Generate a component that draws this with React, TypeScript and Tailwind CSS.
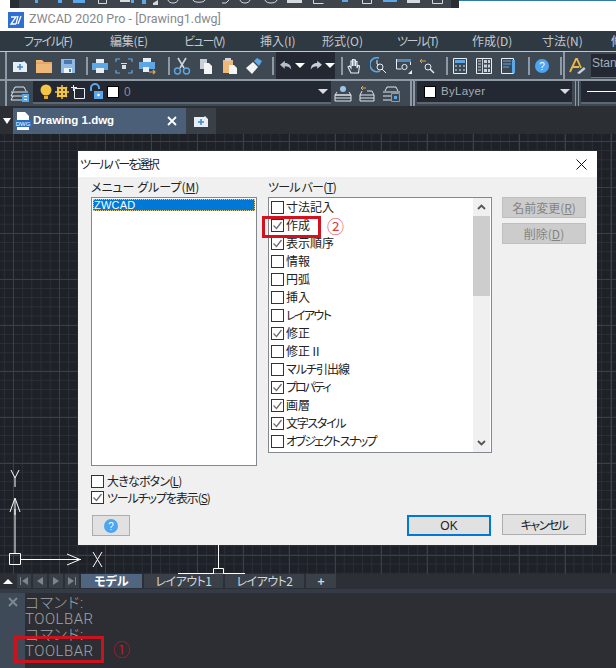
import React from "react";

const font = "font-['Noto_Sans_CJK_JP','Noto_Sans',sans-serif] [font-feature-settings:'palt']";

function Svg({ children, w = 18, h = 18 }: { children: React.ReactNode; w?: number; h?: number }) {
  return (
    <svg width={w} height={h} viewBox={`0 0 ${w} ${h}`} fill="none">
      {children}
    </svg>
  );
}

const icons: Record<string, React.ReactNode> = {
  newfile: (
    <Svg>
      <path d="M2 5h10l1-1 3 3v8H2z" fill="#e8eef4" />
      <path d="M9 7v6M6 10h6" stroke="#3b87d4" strokeWidth="1.5" />
    </Svg>
  ),
  folder: (
    <Svg>
      <path d="M1 3h6l2 2h8v11H1z" fill="#f0b878" />
      <path d="M1 6h16" stroke="#d89a58" />
    </Svg>
  ),
  save: (
    <Svg>
      <path d="M2 2h14v14H2z" fill="#8fb8e4" />
      <path d="M5 3h8v4H5z" fill="#4a78b0" />
      <path d="M5 11h8v5H5z" fill="#eef3f8" />
      <path d="M10 12h2v3h-2z" fill="#4a78b0" />
    </Svg>
  ),
  print: (
    <Svg>
      <path d="M5 2h8v4H5z" fill="#e8eef4" />
      <path d="M1 6h16v7H1z" fill="#5ea7e6" />
      <path d="M5 11h8v5H5z" fill="#e8eef4" />
    </Svg>
  ),
  scan: (
    <Svg>
      <path d="M1 5V2h4M13 2h4v3M1 13v3h4M13 16h4v-3" stroke="#5ea7e6" strokeWidth="1.2" />
      <path d="M6 6h6v1H6zM7 8h4v4H7z" fill="#d8dde2" />
    </Svg>
  ),
  preview: (
    <Svg>
      <path d="M4 1h8v4H4z" fill="#e8eef4" />
      <path d="M0 5h16v7H0z" fill="#5ea7e6" />
      <path d="M4 10h6v5H4z" fill="#e8eef4" />
      <path d="M10 15h6m-2-2 2 2-2 2" stroke="#e0a850" strokeWidth="1.2" />
    </Svg>
  ),
  cut: (
    <Svg>
      <path d="M5 1l6 10M13 1L7 11" stroke="#d0d5da" strokeWidth="1.6" />
      <circle cx="4.5" cy="14" r="3" stroke="#5ea7e6" strokeWidth="1.4" />
      <circle cx="13.5" cy="14" r="3" stroke="#5ea7e6" strokeWidth="1.4" />
    </Svg>
  ),
  copy: (
    <Svg>
      <path d="M3 2h7v10H3z" fill="#c8ced4" />
      <path d="M7 6h5l3 3v8H7z" fill="#f2f4f6" />
    </Svg>
  ),
  paste: (
    <Svg>
      <path d="M2 3h10v13H2z" fill="#f0b878" />
      <path d="M4 1h6v3H4z" fill="#d0d5da" />
      <path d="M8 8h5l3 3v6H8z" fill="#f2f4f6" />
    </Svg>
  ),
  brush: (
    <Svg>
      <path d="M1 11l7-6 5 5-6 7z" fill="#f2f4f6" />
      <path d="M9 4l3-3 5 3-3 5z" fill="#5ea7e6" />
    </Svg>
  ),
  hand: (
    <Svg>
      <path
        d="M5 16l-3-6 1.5-1L5 11V4h1.500v5V2.500H8V9V3h1.500v6V4.500H11V11l1-2.500 1.500.5-1 7z"
        stroke="#e8eef4"
        strokeWidth="1.1"
      />
    </Svg>
  ),
  zoomr: (
    <Svg>
      <path d="M9 1a7 7 0 1 0 1 13" stroke="#5ea7e6" strokeWidth="1.6" />
      <circle cx="10" cy="10" r="3" stroke="#e8eef4" />
      <path d="M12 12l4 4M7 3v4l2 1" stroke="#e8eef4" />
    </Svg>
  ),
  zoomw: (
    <Svg>
      <path d="M1 2h15v3H1z" fill="#5ea7e6" opacity=".7" />
      <path d="M15.500 5v3M1.500 2v10h5" stroke="#e8eef4" />
      <circle cx="9.500" cy="10" r="2.600" stroke="#e8eef4" />
      <path d="M13 17l4-4v4z" fill="#e8eef4" />
    </Svg>
  ),
  zoomp: (
    <Svg>
      <path d="M1 4h6M3 2L1 4l2 2" stroke="#e0a850" />
      <circle cx="9" cy="10" r="3" stroke="#e8eef4" />
      <path d="M11 12l4 4" stroke="#e8eef4" strokeWidth="1.400" />
    </Svg>
  ),
  calc: (
    <Svg>
      <path d="M2.500 1.500h13v15h-13z" stroke="#e8eef4" />
      <path d="M4 3h10v3H4z" fill="#5ea7e6" />
      <path d="M4 8h2v2H4zM8 8h2v2H8zM12 8h2v2h-2zM4 12h2v2H4zM8 12h2v2H8zM12 12h2v2h-2z" fill="#7f9ab4" />
    </Svg>
  ),
  table: (
    <Svg>
      <path d="M1.500 1.500h15v15h-15z" stroke="#e8eef4" />
      <path d="M7.500 2v14M3 4h3M3 7h3M3 10h3M3 13h3" stroke="#c8d0d8" />
      <path d="M9 3h3v3H9zM13 3h2v3h-2zM9 7.500h3v3H9zM13 7.500h2v3h-2zM9 12h3v3H9zM13 12h2v3h-2z" fill="#c8d0d8" />
    </Svg>
  ),
  sheet: (
    <Svg>
      <path d="M2.500 1.500h12v15h-12z" stroke="#e8eef4" />
      <path d="M4 4h8M4 7h8M4 10h6" stroke="#5ea7e6" />
      <path d="M13 3h3v13h-3z" fill="#5ea7e6" />
    </Svg>
  ),
  help: (
    <svg width="18" height="18" viewBox="0 0 18 18">
      <circle cx="9" cy="9" r="7" fill="#4ea5f2" />
      <text x="9" y="12.500" textAnchor="middle" fontSize="10" fill="#ffffff" fontFamily="Liberation Sans">?</text>
    </svg>
  ),
  textstyle: (
    <Svg>
      <path d="M2 15L8 2h1l4 9M5 10h6" stroke="#eab84a" strokeWidth="1.800" />
      <path d="M9 16l7-6 1.500 2-6 5z" fill="#c8d0d8" />
    </Svg>
  ),
  layers: (
    <Svg w={20} h={18}>
      <path d="M3 6l2-4h9l2 4M1 7h17M1 11h11M1 15h11M3 7l-2 4M3 11l-2 4" stroke="#dfe5ea" />
      <path d="M12 9h7v8h-7z" fill="#5ea7e6" />
      <path d="M14 11.500h3M14 14.500h3" stroke="#eaf2fa" />
    </Svg>
  ),
  layerA: (
    <Svg>
      <circle cx="9" cy="4" r="3" fill="#9fc4e8" />
      <path d="M3 7l-2 3h16l-2-3M1 10h16M1 13h16M1 16h16M1 10v6M17 10v6" stroke="#dfe5ea" />
    </Svg>
  ),
  layerB: (
    <Svg>
      <path d="M4 6l-2 4h14l-2-4H9M2 10v6h14v-6M2 13h14" stroke="#dfe5ea" />
      <path d="M8 3H3m2-2L3 3l2 2" stroke="#e0a850" />
    </Svg>
  ),
  layerC: (
    <Svg>
      <path d="M3 6l2-4h9l2 4M1 7h17M1 11h9M1 15h9" stroke="#dfe5ea" />
      <path d="M9.500 8.500h8v8h-8z" stroke="#5ea7e6" />
      <path d="M12 11h3v3h-3z" fill="#5ea7e6" />
    </Svg>
  ),
};

function Tool({ name }: { name: string }) {
  return <div className="w-6 h-full flex items-center justify-center shrink-0">{icons[name]}</div>;
}

function Sep({ className }: { className: string }) {
  return (
    <div className={`h-full flex items-center justify-end shrink-0 ${className}`}>
      <div className="w-0.5 h-[18px] bg-[#8e99a6]" />
    </div>
  );
}

function Grip() {
  return <div className="w-[2px] h-full bg-[#8f9aa8] ml-[5px] mr-px shrink-0" />;
}

function Caret({ className = "" }: { className?: string }) {
  return <div className={`w-0 h-0 border-x-[5px] border-x-transparent border-t-[5px] border-t-[#d8dde2] ${className}`} />;
}

function Arrow({ dir }: { dir: "l" | "r" }) {
  return (
    <svg width="12" height="11" viewBox="0 0 15 12">
      {dir === "l" ? (
        <path d="M0 5l6-5v3c5 0 8 3 8 8-2-3-4-4-8-4v3z" fill="#b8bec5" />
      ) : (
        <path d="M15 5L9 0v3C4 3 1 6 1 11c2-3 4-4 8-4v3z" fill="#c8ced4" />
      )}
    </svg>
  );
}

const checkRows: [string, boolean, string][] = [
  ["寸法記入", false, ""],
  ["作成", true, ""],
  ["表示順序", true, ""],
  ["情報", false, ""],
  ["円弧", false, ""],
  ["挿入", false, ""],
  ["レイアウト", false, "tracking-[-1.6px]"],
  ["修正", true, ""],
  ["修正Ⅱ", false, ""],
  ["マルチ引出線", false, "tracking-[-1px]"],
  ["プロパティ", true, "tracking-[-2px]"],
  ["画層", true, ""],
  ["文字スタイル", true, "tracking-[-1.3px]"],
  ["オブジェクト スナップ", false, "tracking-[-1.7px]"],
];

function Check({ on }: { on: boolean }) {
  return (
    <div className="w-[13px] h-[13px] border border-[#333333] bg-white shrink-0 flex items-center justify-center">
      {on && (
        <svg width="11" height="11" viewBox="0 0 11 11">
          <path d="M1.500 5.500l3 3 5-6.500" stroke="#6e6e6e" strokeWidth="1.300" fill="none" />
        </svg>
      )}
    </div>
  );
}

const menus: [string, string][] = [
  ["ファイル(F)", "w-[86px] tracking-[-1.200px]"],
  ["編集(E)", "w-[74px] tracking-[-0.300px]"],
  ["ビュー(V)", "w-[76px] tracking-[-1.300px]"],
  ["挿入(I)", "w-[62px]"],
  ["形式(O)", "w-[75px]"],
  ["ツール(T)", "w-[75px] tracking-[-1.500px]"],
  ["作成(D)", "w-[70px]"],
  ["寸法(N)", "w-[69px]"],
  ["修", "w-[20px]"],
];

function TabRowButton({ children }: { children: React.ReactNode }) {
  return <div className="w-[14px] h-[14px] flex items-center justify-center bg-[#3a4048] shrink-0">{children}</div>;
}

export default function App() {
  return (
    <div className={`w-[616px] h-[668px] flex flex-col overflow-hidden bg-[#2c2e33] ${font}`}>
      {/* window above */}
      <div className="h-2 flex shrink-0 bg-white">
        <svg className="shrink-0" width="459" height="8" viewBox="0 0 459 8">
          <path d="M19 0h440v8H19z" fill="#3d444c" />
          <path d="M10 0h9v8h-9zM451 0h8v8h-8z" fill="#2b2e35" />
          <g fill="#5ea7e6">
            <path d="M35 0h3v3h-3zM58 0h4v3h-4zM73 0h12v3H73zM131 0h3v3h-3zM142 0h4v4h-4zM342 0h6v2h-6zM383 0h14v2h-14z" />
          </g>
          <g fill="#d5dade">
            <path d="M120 0h10v2h-10zM407 0h13v3h-13zM153 3l5-3v5h-5zM287 0h15v3h-15z" />
          </g>
          <g stroke="#d5dade" fill="none">
            <path d="M98.500 0v3.500h8V0M168 0c1 4 9 4 10 0M193 0c1 3 11 3 12 0M222 3h4l3-3M240 0c1 4 9 4 10 0M265 0c1 4 11 4 12 0M313.500 0v3.500h10M362.500 0v3.500h9V0M432.500 0v3.500h10V0" />
          </g>
        </svg>
        <div className="flex-1 h-px bg-[#2d7da6]" />
      </div>

      {/* title bar */}
      <div className="h-[23px] shrink-0 bg-white flex items-center pl-2 gap-[5px]">
        <div className="w-4 h-4 bg-[#2f6fd0] flex items-center justify-center">
          <svg width="14" height="14" viewBox="0 0 14 14">
            <path d="M2 4h5L2 11h5M9 3l-2 8M12 3l-3 8" stroke="#ffffff" strokeWidth="1.300" fill="none" />
          </svg>
        </div>
        <span className="text-[12.500px] text-[#888888] font-['Roboto',sans-serif] whitespace-nowrap">
          ZWCAD 2020 Pro - [Drawing1.dwg]
        </span>
      </div>

      {/* menu */}
      <div className="h-5 shrink-0 bg-[#2f3941] flex items-center pl-6 text-[12px] text-[#c4c9ce] whitespace-nowrap">
        {menus.map(([t, w]) => (
          <div key={t} className={`${w} shrink-0`}>{t}</div>
        ))}
      </div>
      <div className="h-px shrink-0 bg-[#c3c8cc]" />

      {/* toolbar 1 */}
      <div className="h-[27px] shrink-0 bg-[#3e4853] flex items-center overflow-hidden">
        <Grip />
        <Tool name="newfile" />
        <Tool name="folder" />
        <Tool name="save" />
        <Sep className="w-2" />
        <Tool name="print" />
        <Tool name="scan" />
        <Tool name="preview" />
        <Sep className="w-[10px]" />
        <Tool name="cut" />
        <Tool name="copy" />
        <Tool name="paste" />
        <Tool name="brush" />
        <Sep className="w-2" />
        <div className="w-[59px] ml-0.5 h-full bg-[#232833] flex items-center pl-1 shrink-0">
          <Arrow dir="l" />
          <Caret className="ml-[3px] mr-[5px] border-t-white" />
          <Arrow dir="r" />
          <Caret className="ml-[3px] border-t-white" />
        </div>
        <Sep className="w-2" />
        <Tool name="hand" />
        <Tool name="zoomr" />
        <div className="w-px" />
        <Tool name="zoomw" />
        <Tool name="zoomp" />
        <Sep className="w-2" />
        <Tool name="calc" />
        <Tool name="table" />
        <Tool name="sheet" />
        <Sep className="w-2.5" />
        <Tool name="help" />
        <Sep className="w-2" />
        <div className="w-0.5 h-full bg-[#8e99a6] ml-px shrink-0" />
        <Tool name="textstyle" />
        <div className="flex-1 ml-0.5 h-[24px] bg-[#232833] border-b border-b-[#6b7480] text-[12px] text-[#a7adb4] pl-px font-['Liberation_Sans',sans-serif] overflow-hidden whitespace-nowrap">
          Stan
        </div>
      </div>
      <div className="h-0.5 shrink-0 bg-[#8f9aa4]" />

      {/* toolbar 2 */}
      <div className="h-[25px] shrink-0 bg-[#3e4853] flex items-start overflow-hidden">
        <Grip />
        <Tool name="layers" />
        <div className="w-[298px] ml-px h-[23px] bg-[#232833] border-b-2 border-b-[#5d6772] flex items-center pl-[6px] pr-[3px] gap-[2px] shrink-0">
          <svg width="14" height="16" viewBox="0 0 14 16">
            <circle cx="7" cy="6" r="5.500" fill="#f4c542" />
            <path d="M5 12h4v3H5z" fill="#e0a93a" />
          </svg>
          <svg width="14" height="14" viewBox="0 0 14 14">
            <path d="M2 2h10v10H2z" fill="#f4c542" />
            <path d="M7 0v14M0 7h14M2 2l10 10M12 2L2 12" stroke="#f4c542" strokeWidth="1.500" />
            <circle cx="5" cy="5" r="1" fill="#232833" />
            <circle cx="9" cy="5" r="1" fill="#232833" />
            <circle cx="5" cy="9" r="1" fill="#232833" />
            <circle cx="9" cy="9" r="1" fill="#232833" />
          </svg>
          <svg width="14" height="14" viewBox="0 0 14 14">
            <path d="M3.500 3.500h10v10h-10z" stroke="#e8eef4" fill="none" />
            <path d="M2.500 0v6M0 2.500h6" stroke="#e8eef4" />
          </svg>
          <svg className="ml-[2px]" width="15" height="17" viewBox="0 0 15 17">
            <path d="M2 8V5a4 4 0 0 1 8 0v1" stroke="#5ea7e6" strokeWidth="2" fill="none" />
            <path d="M5 8h9v8H5z" fill="#5ea7e6" />
            <circle cx="9.500" cy="12" r="1.300" fill="#ffffff" />
          </svg>
          <div className="w-3 h-3 bg-white border border-black ml-px" />
          <span className="text-[12px] text-[#8b9097] ml-[3px] font-['Liberation_Sans',sans-serif]">0</span>
          <Caret className="ml-auto" />
        </div>
        <Tool name="layerA" />
        <Tool name="layerB" />
        <Tool name="layerC" />
        <div className="h-full w-[5px] ml-[7px] border-x-2 border-x-[#8e99a6] shrink-0" />
        <div className="w-[155px] ml-[2px] h-[23px] bg-[#232833] border-b-2 border-b-[#5d6772] flex items-center pl-[7px] pr-[2px] shrink-0">
          <div className="w-3 h-3 bg-white border border-black" />
          <span className="text-[11.500px] tracking-[0.3px] text-[#a7adb4] ml-[5px] font-['Liberation_Sans',sans-serif]">ByLayer</span>
          <Caret className="ml-auto" />
        </div>
        <div className="w-1 h-full ml-[3px] border-x border-x-[#8e99a6] shrink-0" />
        <div className="flex-1 ml-[2px] h-[23px] bg-[#232833] border-b-2 border-b-[#5d6772] flex items-center pl-[6px]">
          <div className="flex-1 h-px bg-white" />
        </div>
      </div>

      {/* file tabs */}
      <div className="h-[28px] shrink-0 bg-[#2b2e33] flex items-end text-white">
        <div className="w-[13px] h-[26px] flex items-center justify-center shrink-0">
          <div className="w-0 h-0 border-x-[4px] border-x-transparent border-t-[6px] border-t-white" />
        </div>
        <div className="w-[173px] h-[26px] bg-[#4c5f78] flex items-center pl-[2px] pr-[9px] shrink-0">
          <svg width="16" height="18" viewBox="0 0 16 18">
            <path d="M2 0h8l4 4v14H2z" fill="#ffffff" />
            <path d="M0 8h16v7H0z" fill="#2e6cc4" />
            <text x="8" y="14" textAnchor="middle" fontSize="6" fontFamily="Liberation Sans" fill="#ffffff">DWG</text>
          </svg>
          <span className="ml-[2px] text-[11.500px] font-bold whitespace-nowrap font-['Liberation_Sans',sans-serif]">Drawing 1.dwg</span>
          <svg className="ml-auto" width="10" height="10" viewBox="0 0 10 10">
            <path d="M1 1l8 8M9 1l-8 8" stroke="#ffffff" strokeWidth="1.800" />
          </svg>
        </div>
        <div className="w-[30px] h-[26px] bg-[#3a4048] flex items-center justify-center shrink-0">{icons.newfile}</div>
      </div>

      {/* canvas */}
      <div className="h-[440px] shrink-0 relative bg-[#1e2128] bg-[linear-gradient(to_right,#3c4046_1px,transparent_1px),linear-gradient(to_bottom,#3c4046_1px,transparent_1px),linear-gradient(to_right,#2b2f36_1px,transparent_1px),linear-gradient(to_bottom,#2b2f36_1px,transparent_1px)] bg-[size:46px_46px,46px_46px,9.2px_9.2px,9.2px_9.2px] bg-[position:13px_7px,13px_7px,13px_7px,13px_7px]">
        <svg className="absolute left-0 top-[331px]" width="120" height="109" viewBox="0 0 120 109">
          <g stroke="#ffffff" fill="none" strokeWidth="1">
            <path d="M15 88V34M10 47l5-14 5 14M15 44v6" />
            <path d="M20.500 94.500H81M67 89l13 5.500-13 5.500" />
            <path d="M9.500 88.500h11v11h-11z" />
            <path d="M11 5l4 8 4-8M15 13v9" />
            <path d="M93 87l9 15M102 87l-9 15" />
          </g>
        </svg>
        <svg className="absolute left-[175px] top-[411px]" width="70" height="29" viewBox="0 0 70 29">
          <g stroke="#ffffff" fill="none">
            <path d="M43.500 0v23M3 28.500h36M49 28.500h21" />
            <path d="M38.500 23.500h10v5.500h-10z" />
          </g>
        </svg>

        {/* dialog */}
        <div className="absolute left-[78px] top-[17px] w-[519px] h-[394px] bg-[#f0f0f0] flex flex-col text-[12px] text-[#222222]">
          <div className="h-[26px] bg-white flex items-center justify-between pl-[2px] pr-[10px] shrink-0">
            <span className="tracking-[-1.800px]">ツールバーを選択</span>
            <svg width="11" height="11" viewBox="0 0 11 11">
              <path d="M.5.5l10 10M10.500.5l-10 10" stroke="#111111" />
            </svg>
          </div>
          <div className="flex-1 flex pl-[13px] relative">
            <div className="w-[166px] flex flex-col shrink-0">
              <div className="h-5 leading-5 whitespace-nowrap">メニュー グループ(<u>M</u>)</div>
              <div className="h-[269px] bg-white border border-[#828790] p-px">
                <div className="h-[12px] bg-[#0078d7] border border-dotted border-[#d8c890] text-white text-[11px] leading-[10px] font-['Liberation_Sans',sans-serif] tracking-[0.2px]">ZWCAD</div>
              </div>
              <div className="mt-[7px] flex items-center gap-[3px] h-4">
                <Check on={false} />
                <span className="whitespace-nowrap tracking-[-0.800px]">大きなボタン(<u>L</u>)</span>
              </div>
              <div className="mt-px flex items-center gap-[3px] h-[15px]">
                <Check on />
                <span className="whitespace-nowrap tracking-[-1.100px]">ツールチップを表示(<u>S</u>)</span>
              </div>
              <div className="mt-[10px] ml-px w-[38px] h-[21px] bg-[#e1e1e1] border border-[#adadad] flex items-center justify-center">
                {icons.help}
              </div>
            </div>
            <div className="w-[224px] ml-[11px] flex flex-col shrink-0">
              <div className="h-5 leading-5 whitespace-nowrap tracking-[-0.800px]">ツール バー(<u>T</u>)</div>
              <div className="h-[256px] bg-white border border-[#828790] flex overflow-hidden">
                <div className="flex-1 flex flex-col pl-[2px]">
                  {checkRows.map(([t, on, tr]) => (
                    <div key={t} className="h-[18px] shrink-0 flex items-center gap-[2px] whitespace-nowrap">
                      <Check on={on} />
                      <span className={tr}>{t}</span>
                    </div>
                  ))}
                </div>
                <div className="w-[17px] mr-[1px] bg-[#f0f0f0] flex flex-col items-center shrink-0">
                  <div className="h-[18px] flex items-center justify-center">
                    <svg width="9" height="6" viewBox="0 0 9 6">
                      <path d="M1 5l3.500-3.500L8 5" stroke="#555555" strokeWidth="1.800" fill="none" />
                    </svg>
                  </div>
                  <div className="w-full h-[80px] bg-[#cdcdcd]" />
                  <div className="mt-auto h-[18px] flex items-center justify-center">
                    <svg width="9" height="6" viewBox="0 0 9 6">
                      <path d="M1 1l3.500 3.500L8 1" stroke="#555555" strokeWidth="1.800" fill="none" />
                    </svg>
                  </div>
                </div>
              </div>
              <div className="mt-[62px] self-end w-[84px] mr-px h-[21px] bg-[#e1e1e1] border-2 border-[#0078d7] flex items-center justify-center font-['Liberation_Sans',sans-serif]">
                OK
              </div>
            </div>
            <div className="w-[84px] ml-[10px] flex flex-col shrink-0">
              <div className="h-[21px] mt-5 bg-[#cccccc] border border-[#bfbfbf] text-[#838383] flex items-center justify-center whitespace-nowrap">
                名前変更(<u>R</u>)
              </div>
              <div className="h-[21px] mt-[5px] bg-[#cccccc] border border-[#bfbfbf] text-[#838383] flex items-center justify-center whitespace-nowrap">
                削除(<u>D</u>)
              </div>
              <div className="mt-[270px] h-[21px] bg-[#e1e1e1] border border-[#adadad] flex items-center justify-center whitespace-nowrap tracking-[-1.500px]">
                キャンセル
              </div>
            </div>
            <div className="absolute left-[184px] top-[39px] w-[59px] h-[22px] border-[3px] border-[#d3121f]" />
            <span className="absolute left-[249px] top-[39px] text-[17px] leading-[20px] text-[#d8404a]">②</span>
          </div>
        </div>
      </div>

      {/* layout tabs */}
      <div className="h-[15px] shrink-0 bg-[#2c2f35] flex items-start text-[12px] text-[#d4d8dc] gap-[2px] whitespace-nowrap">
        <div className="w-[15px] h-[14px] flex items-center justify-center shrink-0">
          <div className="w-0 h-0 border-x-[5px] border-x-transparent border-b-[5px] border-b-white" />
        </div>
        <TabRowButton><div className="w-px h-2 bg-[#7e858d] mr-px" /><div className="w-0 h-0 border-y-[4px] border-y-transparent border-r-[6px] border-r-[#7e858d]" /></TabRowButton>
        <TabRowButton><div className="w-0 h-0 border-y-[4px] border-y-transparent border-r-[6px] border-r-[#7e858d]" /></TabRowButton>
        <TabRowButton><div className="w-0 h-0 border-y-[4px] border-y-transparent border-l-[6px] border-l-[#7e858d]" /></TabRowButton>
        <TabRowButton><div className="w-0 h-0 border-y-[4px] border-y-transparent border-l-[6px] border-l-[#7e858d]" /><div className="w-px h-2 bg-[#7e858d] ml-px" /></TabRowButton>
        <div className="w-[61px] h-[14px] bg-[#4f6580] flex items-center justify-center font-bold text-white shrink-0">モデル</div>
        <div className="w-[79px] h-[14px] bg-[#3a4048] flex items-center justify-center shrink-0 tracking-[-0.500px]">レイアウト1</div>
        <div className="w-[79px] h-[14px] bg-[#3a4048] flex items-center justify-center shrink-0 tracking-[-0.500px]">レイアウト2</div>
        <div className="w-[30px] h-[14px] bg-[#3a4048] flex items-center justify-center shrink-0 font-bold">+</div>
      </div>
      <div className="h-1 shrink-0 bg-[#343b46]" />

      {/* command */}
      <div className="flex-1 flex relative">
        <div className="w-[25px] bg-[#3f4a58] flex justify-center pt-[4px] shrink-0">
          <svg width="10" height="10" viewBox="0 0 10 10">
            <path d="M1 1l8 8M9 1L1 9" stroke="#7d8793" strokeWidth="2" />
          </svg>
        </div>
        <div className="flex flex-col pt-[2px] text-[15px] tracking-[0.5px] leading-4 font-light text-[#a0a3a7] font-['Roboto','Noto_Sans_CJK_JP',sans-serif] whitespace-nowrap">
          <div>コマンド:</div>
          <div>TOOLBAR</div>
          <div>コマンド:</div>
          <div>TOOLBAR</div>
        </div>
        <div className="absolute left-[14px] top-[43px] w-[90px] h-[27px] border-[3px] border-[#c8141f]" />
        <span className="absolute left-[113px] top-[46px] text-[17px] leading-[20px] text-[#c8141f]">①</span>
      </div>
    </div>
  );
}
